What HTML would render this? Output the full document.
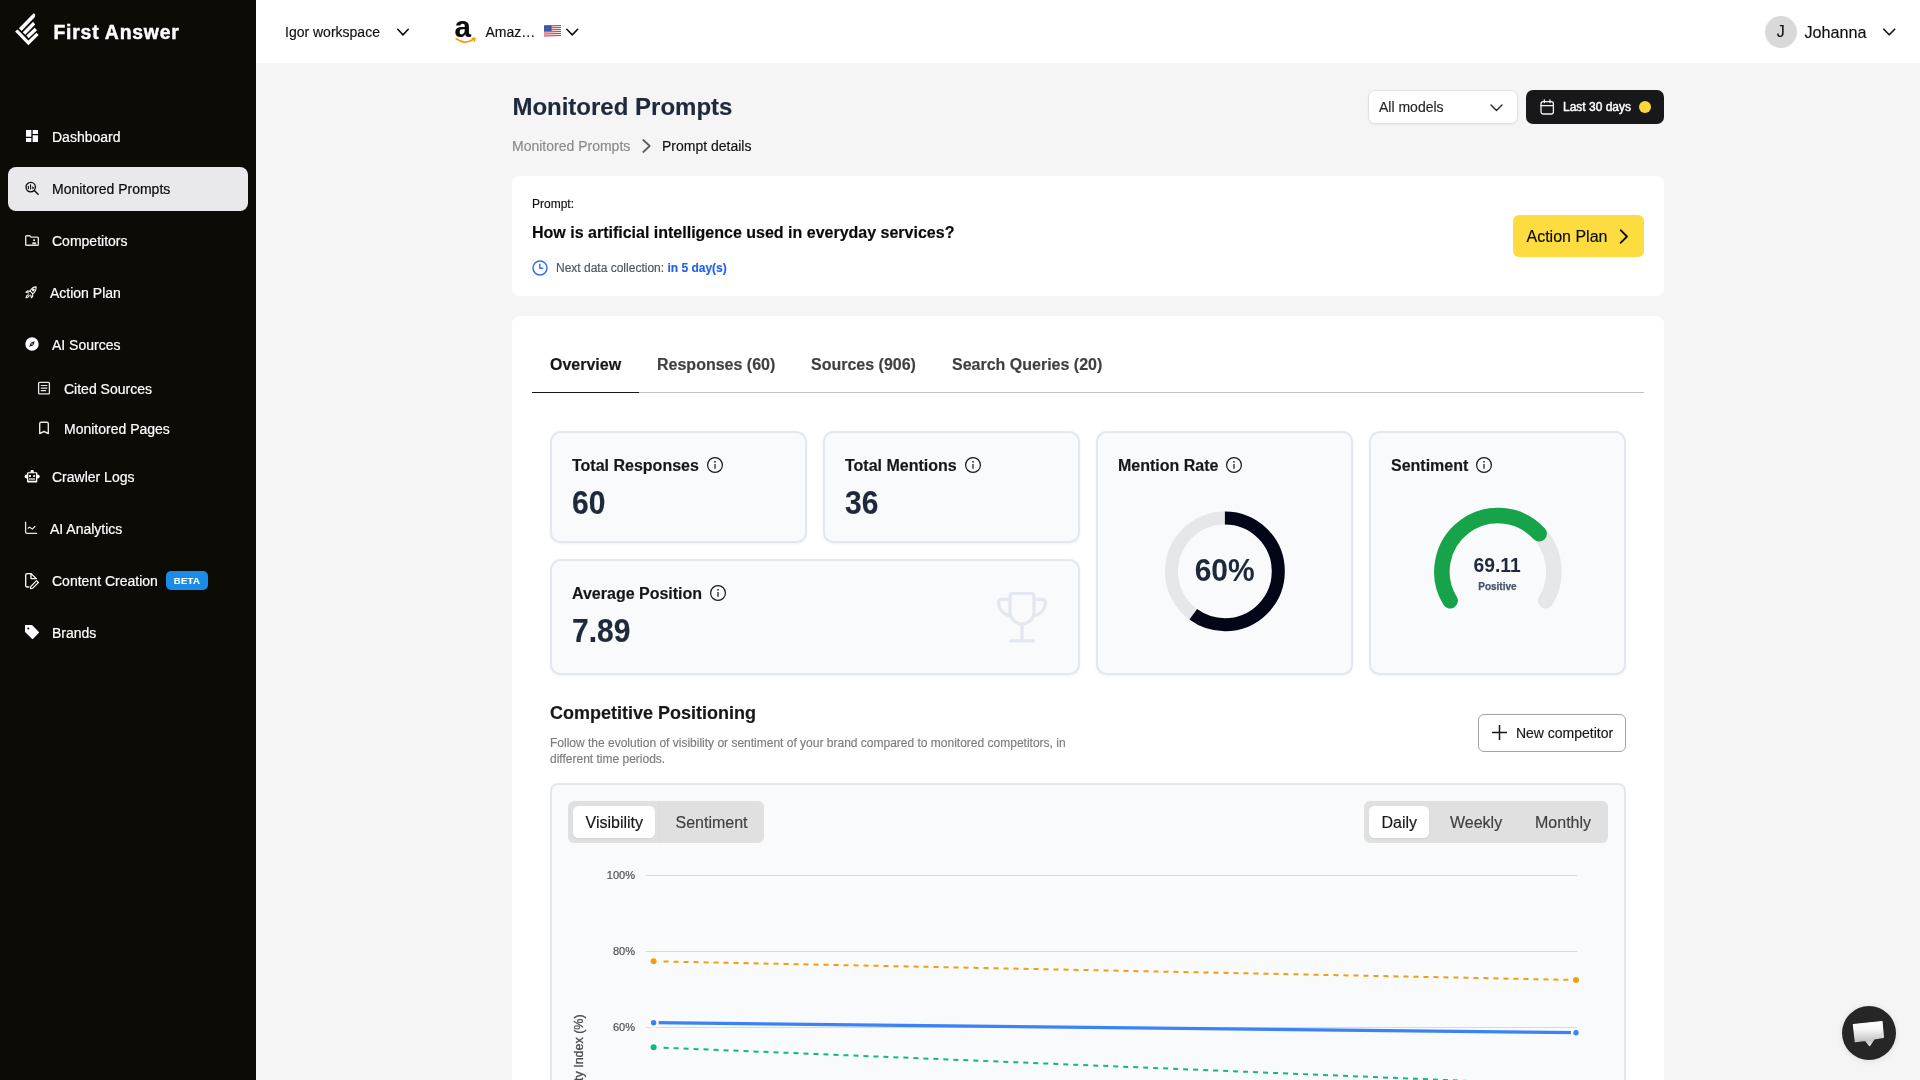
<!DOCTYPE html>
<html lang="en">
<head>
<meta charset="utf-8">
<title>Monitored Prompts - First Answer</title>
<style>
*{box-sizing:border-box;margin:0;padding:0}
html,body{width:1920px;height:1080px;overflow:hidden;background:#f5f5f5}
body{font-family:"Liberation Sans",Arial,Helvetica,sans-serif;color:#0a0a0a;position:relative;-webkit-font-smoothing:antialiased;will-change:transform;-webkit-text-stroke:.16px currentColor}
.abs{position:absolute}
.t{position:absolute;white-space:nowrap;line-height:20px}
svg{display:block;overflow:visible}

/* Sidebar */
#sidebar{position:absolute;left:0;top:0;width:256px;height:1080px;background:#0c0b06}
#logo-text{left:53.5px;top:17.7px;font-size:19.4px;line-height:28px;font-weight:700;color:#fff;letter-spacing:.78px;-webkit-text-stroke:.45px #fff}
.nav{position:absolute;left:8px;width:240px;height:44px;border-radius:8px;color:#fff;font-size:14px}
.nav.active{background:#e9e9eb;color:#0a0a0a}
.nav .ic{position:absolute;left:16px;top:13px;width:16px;height:16px}
.nav .lb{position:absolute;left:44px;top:12px;line-height:20px;white-space:nowrap;-webkit-text-stroke:.2px currentColor}
.nav.sub .ic{left:28px}
.nav.sub .lb{left:56px}
.beta{position:absolute;left:158px;top:11.7px;width:42px;height:19.4px;border-radius:5px;background:#1a8be6;color:#fff;font-size:9.5px;font-weight:700;line-height:19.4px;text-align:center;letter-spacing:.3px}

/* Topbar */
#topbar{position:absolute;left:256px;top:0;width:1664px;height:63px;background:#fff}

/* Header */
#title{left:512.4px;top:91px;font-size:24px;line-height:32px;font-weight:700;color:#1e293b}
.card{position:absolute;background:#fff;border-radius:8px}
.stat{position:absolute;background:#f9fafc;border:2px solid #e3e7ef;border-radius:10.5px;box-shadow:0 1px 2.5px rgba(100,116,139,.09)}
.stat .h{position:absolute;left:20px;top:20.7px;font-size:16px;line-height:24px;font-weight:700;color:#171717;white-space:nowrap}
.stat .v{position:absolute;left:20px;top:51.1px;font-size:30px;line-height:40px;font-weight:700;color:#1e293b;white-space:nowrap;transform:scaleY(1.09);transform-origin:0 30.4px}
.stat .info{position:absolute;margin-left:-1.25px;top:22.9px;width:18px;height:18px}
.tab{top:38px;font-size:16px;line-height:22px;font-weight:700;color:#404040}
.seg{background:#e0e0e0;border-radius:6px}
.segon{background:#fff;border-radius:5.5px;box-shadow:0 1px 2px rgba(0,0,0,.06)}
.chev{fill:none;stroke:#111;stroke-width:1.6;stroke-linecap:round;stroke-linejoin:round}
</style>
</head>
<body>

<!-- ============ SIDEBAR ============ -->
<div id="sidebar">
  <svg class="abs" style="left:0;top:0" width="56" height="56" viewBox="0 0 56 56" fill="#fff">
    <polygon points="28.4,45.3 15.1,31.6 17.6,29.6 28.4,40.4 36.4,32.7 38.7,35.1"/>
    <polygon points="18.9,28.2 33.6,13.3 35.2,14.4 34.9,17.1 21.6,31.1"/>
    <polygon points="22.7,32.2 33.1,21.8 35.2,24.4 25.3,34.7"/>
    <polygon points="26.4,35.6 34.7,27.8 37,30.2 28.7,38.2"/>
  </svg>
  <div class="t" id="logo-text">First Answer</div>

  <div class="nav" style="top:115px"><span class="ic" id="ic-dash"><svg width="16" height="16" viewBox="0 0 24 24" fill="#fff"><path d="M3 13h8V3H3v10zm0 8h8v-6H3v6zm10 0h8V11h-8v10zm0-18v6h8V3h-8z"/></svg></span><span class="lb">Dashboard</span></div>
  <div class="nav active" style="top:167px"><span class="ic" id="ic-mon"><svg width="16" height="16" viewBox="0 0 16 16" fill="none" stroke="#0a0a0a" stroke-linecap="round"><circle cx="6.7" cy="7.1" r="4.7" stroke-width="1.3"/><path d="M10.3 10.6L14.1 14.3" stroke-width="1.4"/><path d="M4.4 6.2V8.6M6.6 4.9V8.9" stroke-width="1.1"/><path d="M8.9 7.2V8.4" stroke-width="1.3"/></svg></span><span class="lb">Monitored Prompts</span></div>
  <div class="nav" style="top:219px"><span class="ic" id="ic-comp"><svg width="16" height="16" viewBox="0 0 16 16" fill="none" stroke="#e0e0e0" stroke-width="1.4" stroke-linejoin="round"><path d="M1.7 4.6Q1.7 3.7 2.6 3.7H5.6L7.1 5.1H13.4Q14.3 5.1 14.3 6V12.4Q14.3 13.3 13.4 13.3H2.6Q1.7 13.3 1.7 12.4Z"/><rect x="9.3" y="7.3" width="1.7" height="1.7" fill="#fff" stroke="none"/><rect x="8.3" y="10.3" width="3.8" height="2" fill="#e0e0e0" stroke="none"/></svg></span><span class="lb">Competitors</span></div>
  <div class="nav" style="top:271px"><span class="ic" id="ic-act"><svg width="16" height="16" viewBox="-.85 -2.1 18.6 18.6" fill="none" stroke="#fff" stroke-width="1.25" stroke-linejoin="round" stroke-linecap="round"><path d="M13.3 1.2C10.2 1.3 7.6 3.2 6.2 6.2L9.2 9.2C12.1 7.8 13.3 4.6 13.3 1.2Z"/><circle cx="10" cy="4.9" r="1"/><path d="M6.2 6.2L2.9 6.1L1.4 7.6L4.6 8.4M9.2 9.2L9.3 12.3L7.8 13.9L7 10.7"/><path d="M4.2 10.3C3 10.5 1.9 11.5 1.5 13.9C3.9 13.5 4.9 12.5 5.2 11.3"/></svg></span><span class="lb" style="left:42px">Action Plan</span></div>
  <div class="nav" style="top:323px"><span class="ic" id="ic-src"><svg width="16" height="16" viewBox="0 0 16 16"><path fill="#fff" fill-rule="evenodd" d="M8 1.3A6.7 6.7 0 1 0 8 14.7A6.7 6.7 0 1 0 8 1.3ZM5.3 10.7L6.7 6.7L10.7 5.3L9.3 9.3Z"/><circle cx="8" cy="8" r=".8" fill="#fff"/></svg></span><span class="lb">AI Sources</span></div>
  <div class="nav sub" style="top:367px"><span class="ic" id="ic-cited"><svg width="16" height="16" viewBox="0 0 16 16" fill="none" stroke="#e6e6e6" stroke-width="1.3"><rect x="2.6" y="2.3" width="10.8" height="11.6" rx="1"/><path d="M4.8 5.5H11.3M4.8 8.1H11.3M4.8 10.7H10.2" stroke-width="1.2"/></svg></span><span class="lb">Cited Sources</span></div>
  <div class="nav sub" style="top:407px"><span class="ic" id="ic-pages"><svg width="16" height="16" viewBox="0 0 16 16" fill="none" stroke="#e6e6e6" stroke-width="1.4" stroke-linejoin="round"><path d="M3.7 13.5V3.7Q3.7 2.3 5.1 2.3H10.9Q12.3 2.3 12.3 3.7V13.5L8 11.5Z"/></svg></span><span class="lb">Monitored Pages</span></div>
  <div class="nav" style="top:455px"><span class="ic" id="ic-crawl"><svg width="16" height="16" viewBox="0 0 16 16"><g fill="#fff"><circle cx="2.7" cy="8.5" r="2.1"/><circle cx="13.6" cy="8.5" r="2.1"/><path d="M6.1 4.4L7 2.3Q7.2 2 7.5 2H8.8Q9.1 2 9.3 2.3L10.2 4.4Z"/><rect x="3" y="4.2" width="10.3" height="10.3" rx="1"/></g><rect x="4.3" y="5.3" width="7.7" height="7.4" fill="#0c0b06"/><rect x="5" y="7.1" width="2" height="1.8" fill="#fff"/><rect x="9.2" y="7.1" width="1.9" height="1.8" fill="#fff"/><rect x="5" y="10.2" width="6.1" height="1.6" fill="#c4c4c4"/></svg></span><span class="lb">Crawler Logs</span></div>
  <div class="nav" style="top:507px"><span class="ic" id="ic-ana"><svg width="16" height="16" viewBox="0 0 16 16" fill="none" stroke="#e6e6e6" stroke-linecap="round" stroke-linejoin="round"><path d="M1.6 2.1V11.9Q1.6 13.3 3 13.3H12.7" stroke-width="1.3"/><path d="M4.1 8.2L5.6 7.1L8.3 9.1L11 6.3" stroke="#fff" stroke-width="1.1"/></svg></span><span class="lb" style="left:42px">AI Analytics</span></div>
  <div class="nav" style="top:559px"><span class="ic" id="ic-cont"><svg width="16" height="16" viewBox="0 0 16 16" fill="none" stroke="#fff" stroke-width="1.3" stroke-linejoin="round" stroke-linecap="round"><path d="M4.9 15H3.3Q1.7 15 1.7 13.4V3.2Q1.7 1.6 3.3 1.6H7L12.3 6.6"/><path d="M7 1.8V6.6H12.1" /><path d="M12.6 8.7L14.4 10.5L8.6 16.3L6.5 16.6L6.8 14.5Z" stroke-width="1.1"/></svg></span><span class="lb">Content Creation</span><span class="beta">BETA</span></div>
  <div class="nav" style="top:611px"><span class="ic" id="ic-brand"><svg width="16" height="16" viewBox="0 0 16 16"><path fill="#fff" fill-rule="evenodd" d="M1 1.6Q1 1 1.6 1H7.7Q8 1 8.3 1.3L14.9 7.9Q15.2 8.3 14.9 8.7L8.9 14.9Q8.5 15.3 8.1 14.9L1.3 8.2Q1 7.9 1 7.6ZM4.3 3.4A1 1 0 1 0 4.3 5.4A1 1 0 1 0 4.3 3.4Z"/></svg></span><span class="lb">Brands</span></div>
</div>

<!-- ============ TOPBAR ============ -->
<div id="topbar">
  <div class="t" style="left:29px;top:22px;font-size:14px;color:#111">Igor workspace</div>
  <svg class="abs chev" style="left:141px;top:27.5px" width="12" height="9" viewBox="0 0 12 9"><path d="M.8 1.3L6 6.9L11.2 1.3"/></svg>
  <!-- amazon mark -->
  <div class="t" style="left:198.6px;top:12.6px;font-size:29.5px;line-height:28px;font-weight:700;color:#0a0a0a">a</div>
  <svg class="abs" style="left:198.5px;top:36.6px" width="22" height="8" viewBox="0 0 22 8" fill="none" stroke="#f90" stroke-linecap="round"><path d="M1.2 1.6C6.5 5.8 13 5.8 18.6 2.2" stroke-width="1.7"/><path d="M17 1.3L20.3 1.1L19.4 4.2" stroke-width="1.2" stroke-linejoin="round"/></svg>
  <div class="t" style="left:229.5px;top:22px;font-size:14px;color:#111">Amaz…</div>
  <!-- US flag -->
  <svg class="abs" style="left:287.5px;top:25px" width="17" height="12" viewBox="0 0 17 12">
    <g transform="skewY(-2)"><rect x="0" y=".6" width="17" height="11" rx="1" fill="#f2f2f2"/>
    <g fill="#d8323f"><rect x="0" y=".6" width="17" height="1.1"/><rect x="0" y="2.6" width="17" height="1"/><rect x="0" y="4.6" width="17" height="1"/><rect x="0" y="6.6" width="17" height="1"/><rect x="0" y="8.6" width="17" height="1"/><rect x="0" y="10.5" width="17" height="1.1"/></g>
    <rect x="0" y=".6" width="7.6" height="6" fill="#3c5aa6"/></g>
  </svg>
  <svg class="abs chev" style="left:310px;top:27.5px" width="12.5" height="9" viewBox="0 0 12.5 9"><path d="M.8 1.3L6.25 6.9L11.7 1.3"/></svg>

  <div class="abs" style="left:1508.7px;top:15.5px;width:32px;height:32px;border-radius:50%;background:#d9d9d9"></div>
  <div class="t" style="left:1508.7px;top:22px;width:32px;text-align:center;font-size:16px;color:#111">J</div>
  <div class="t" style="left:1548.5px;top:22px;font-size:16.2px;color:#111">Johanna</div>
  <svg class="abs chev" style="left:1627px;top:28px" width="12.5" height="9" viewBox="0 0 12.5 9"><path d="M.8 1.2L6.25 6.8L11.7 1.2"/></svg>
</div>

<!-- ============ PAGE HEADER ============ -->
<div class="t" id="title">Monitored Prompts</div>
<div class="t" style="left:512px;top:136px;font-size:14px;color:#8a8a8a">Monitored Prompts</div>
<div class="t" style="left:662px;top:136px;font-size:14px;color:#111">Prompt details</div>

<svg class="abs" style="left:642px;top:139px;fill:none;stroke:#5e5e5e;stroke-width:1.8;stroke-linecap:round;stroke-linejoin:round" width="9" height="14" viewBox="0 0 9 14"><path d="M1.3 1L7.7 7L1.3 13"/></svg>

<!-- all models select -->
<div class="abs" style="left:1367.6px;top:90px;width:150px;height:33.5px;background:#fff;border:1px solid #e2e2e2;border-radius:7px;box-shadow:0 1px 2px rgba(0,0,0,.05)">
  <div class="t" style="left:10.4px;top:6px;font-size:14px;color:#262626">All models</div>
  <svg class="abs chev" style="left:121px;top:12.5px;stroke:#262626;stroke-width:1.4" width="13" height="8" viewBox="0 0 13 8"><path d="M1 1L6.5 6.6L12 1"/></svg>
</div>
<!-- last 30 days -->
<div class="abs" style="left:1526px;top:89.8px;width:138px;height:34px;background:#18181b;border-radius:7px">
  <svg class="abs" style="left:13.5px;top:9.5px" width="15" height="16" viewBox="0 0 15 16" fill="none" stroke="#f2f2f2" stroke-width="1.3" stroke-linecap="round"><rect x="1" y="2.6" width="12.4" height="12.4" rx="2.2"/><path d="M1 6.6H13.4M4.3 .8V3.6M10 .8V3.6"/></svg>
  <div class="t" style="left:37px;top:7px;font-size:12px;color:#fff;-webkit-text-stroke:.45px #fff">Last 30 days</div>
  <div class="abs" style="left:113px;top:11.2px;width:12px;height:12px;border-radius:50%;background:#fdd835"></div>
</div>

<!-- ============ PROMPT CARD ============ -->
<div class="card" style="left:512px;top:176px;width:1152px;height:120px">
  <div class="t" style="left:20px;top:18px;font-size:12px;color:#111">Prompt:</div>
  <div class="t" style="left:20px;top:45.2px;font-size:16px;line-height:24px;font-weight:700;color:#0a0a0a">How is artificial intelligence used in everyday services?</div>
  <svg class="abs" style="left:20px;top:84px" width="16" height="16" viewBox="0 0 16 16" fill="none" stroke="#3b6cf0" stroke-width="1.5" stroke-linecap="round" stroke-linejoin="round"><circle cx="8" cy="8" r="7"/><path d="M7.8 4.2V8.3H10.6"/></svg>
  <div class="abs" style="left:1001px;top:39px;width:131px;height:42px;border-radius:6px;background:#fddc3f">
    <div class="t" style="left:13.5px;top:12.2px;font-size:16px;color:#0a0a0a">Action Plan</div>
    <svg class="abs" style="left:106px;top:13.5px;fill:none;stroke:#0a0a0a;stroke-width:1.8;stroke-linecap:round;stroke-linejoin:round" width="10" height="15" viewBox="0 0 10 15"><path d="M1.6 1.2L8 7.5L1.6 13.8"/></svg>
  </div>
  <div class="t" style="left:44px;top:82px;font-size:12px;color:#4b5563">Next data collection: <b style="color:#2563eb">in 5 day(s)</b></div>
</div>

<!-- ============ MAIN CARD ============ -->
<div class="card" id="main" style="left:512px;top:316px;width:1152px;height:800px">
  <!-- tabs -->
  <div class="abs" style="left:20px;top:76px;width:1112px;height:1px;background:#c2c2c2"></div>
  <div class="abs" style="left:20px;top:76px;width:107px;height:1px;background:#171717"></div>
  <div class="t tab" style="left:38px;color:#171717">Overview</div>
  <div class="t tab" style="left:145px">Responses (60)</div>
  <div class="t tab" style="left:299px">Sources (906)</div>
  <div class="t tab" style="left:440px">Search Queries (20)</div>

  <!-- stat cards -->
  <div class="stat" style="left:38px;top:115px;width:257px;height:112px">
    <div class="h">Total Responses</div><div class="v">60</div>
    <svg class="info" style="left:155px" viewBox="0 0 18 18"><use href="#i-info"/></svg>
  </div>
  <div class="stat" style="left:311px;top:115px;width:257px;height:112px">
    <div class="h">Total Mentions</div><div class="v">36</div>
    <svg class="info" style="left:140px" viewBox="0 0 18 18"><use href="#i-info"/></svg>
  </div>
  <div class="stat" style="left:38px;top:243px;width:530px;height:116px">
    <div class="h">Average Position</div><div class="v">7.89</div>
    <svg class="abs" style="left:444px;top:29px" width="52" height="54" viewBox="0 0 52 54" fill="none" stroke="#e2e8f0" stroke-width="3.2" stroke-linecap="round" stroke-linejoin="round">
      <path d="M17 3.5 H35 Q38 3.5 38 6.5 V22 A12 12 0 0 1 14 22 V6.5 Q14 3.5 17 3.5 Z"/>
      <path d="M26 34 V50 M14.5 50.8 H37.5"/>
      <path d="M14 9.3 H5.8 Q2.6 9.3 2.6 12.5 C2.6 19.5 8 24.8 14 25.6"/>
      <path d="M38 9.3 H46.2 Q49.4 9.3 49.4 12.5 C49.4 19.5 44 24.8 38 25.6"/>
    </svg>
    <svg class="info" style="left:158px" viewBox="0 0 18 18"><use href="#i-info"/></svg>
  </div>
  <div class="stat" style="left:584px;top:115px;width:257px;height:244px">
    <div class="h">Mention Rate</div>
    <svg class="abs" style="left:.1px;top:.9px" width="253" height="239">
      <circle cx="126.9" cy="137.3" r="53.4" fill="none" stroke="#e5e7eb" stroke-width="13"/>
      <circle cx="126.9" cy="137.3" r="53.4" fill="none" stroke="#020617" stroke-width="13" stroke-dasharray="201.31 335.52" transform="rotate(-90 126.9 137.3)"/>
      <text transform="translate(126.7,146.9) scale(1,1.06)" text-anchor="middle" font-size="30" font-weight="700" fill="#1e293b" font-family="Liberation Sans, Arial, sans-serif">60%</text>
    </svg>
    <svg class="info" style="left:128px" viewBox="0 0 18 18"><use href="#i-info"/></svg>
  </div>
  <div class="stat" style="left:857px;top:115px;width:257px;height:244px">
    <div class="h">Sentiment</div>
    <svg class="abs" style="left:-.1px;top:.7px" width="253" height="239">
      <path d="M79.10 166.78 A56 56 0 1 1 174.70 166.78" fill="none" stroke="#e5e7eb" stroke-width="15.5" stroke-linecap="round"/>
      <path d="M79.10 166.78 A56 56 0 0 1 168.19 99.77" fill="none" stroke="#16a34a" stroke-width="15.5" stroke-linecap="round"/>
      <text transform="translate(126.1,137.8) scale(1,1.05)" text-anchor="middle" font-size="19.3" font-weight="700" fill="#1e293b" font-family="Liberation Sans, Arial, sans-serif">69.11</text>
      <text x="126.4" y="155.9" text-anchor="middle" font-size="10" font-weight="700" fill="#475569" stroke="#475569" stroke-width=".25" font-family="Liberation Sans, Arial, sans-serif">Positive</text>
    </svg>
    <svg class="info" style="left:105px" viewBox="0 0 18 18"><use href="#i-info"/></svg>
  </div>

  <!-- competitive positioning -->
  <div class="t" style="left:38px;top:384px;font-size:18px;line-height:26px;font-weight:700;color:#171717">Competitive Positioning</div>
  <div class="abs" style="left:38px;top:419.2px;width:540px;font-size:12px;line-height:16px;color:#7d7d7d">Follow the evolution of visibility or sentiment of your brand compared to monitored competitors, in different time periods.</div>

  <!-- new competitor button -->
  <div class="abs" style="left:966.4px;top:398px;width:147.2px;height:37.5px;border:1px solid #a3a3a3;border-radius:6px;background:#fff">
    <svg class="abs" style="left:12.7px;top:9.9px" width="15" height="15" viewBox="0 0 15 15"><path d="M7.5 0v15M0 7.5h15" stroke="#171717" stroke-width="1.5" fill="none"/></svg>
    <div class="t" style="left:36.5px;top:7.5px;font-size:14px;color:#171717">New competitor</div>
  </div>

  <!-- chart card -->
  <div class="abs" id="chart" style="left:38px;top:467px;width:1076px;height:400px;border:2px solid #e5e6e7;border-radius:8px;background:#f9fafb">
    <div class="abs seg" style="left:16px;top:16px;width:196px;height:42px"></div>
    <div class="abs" style="left:106.5px;top:16px;width:1px;height:42px;background:#dbdbdb"></div>
    <div class="abs segon" style="left:21px;top:21px;width:82px;height:32px"></div>
    <div class="t" style="left:33.5px;top:27.2px;font-size:16px;line-height:22px;color:#171717">Visibility</div>
    <div class="t" style="left:123.5px;top:27.2px;font-size:16px;line-height:22px;color:#404040">Sentiment</div>

    <div class="abs seg" style="left:812px;top:16px;width:244px;height:42px"></div>
    <div class="abs segon" style="left:817px;top:21px;width:60px;height:32px"></div>
    <div class="t" style="left:829.5px;top:27.2px;font-size:16px;line-height:22px;color:#171717">Daily</div>
    <div class="t" style="left:898px;top:27.2px;font-size:16px;line-height:22px;color:#404040">Weekly</div>
    <div class="t" style="left:983px;top:27.2px;font-size:16px;line-height:22px;color:#404040">Monthly</div>

    <svg class="abs" style="left:-2px;top:-1px" width="1076" height="400" font-family="Liberation Sans, Arial, sans-serif">
      <!-- origin = page (550,784) -->
      <g stroke="#d9d9d9" stroke-width="1">
        <path d="M95.5 91.5H1027 M95.5 167.5H1027 M95.5 243.5H1027"/>
      </g>
      <g font-size="11" fill="#525252" stroke="#525252" stroke-width=".2" text-anchor="end">
        <text x="85" y="95">100%</text>
        <text x="85" y="171">80%</text>
        <text x="85" y="247">60%</text>
      </g>
      <text transform="translate(33.2,281.3) rotate(-90)" font-size="12.5" fill="#4b4b4b" stroke="#4b4b4b" stroke-width=".3" text-anchor="middle" id="ylab">Visibility Index (%)</text>
      <path d="M103.6 177.3 L1026 196" stroke="#f59e0b" stroke-width="2" stroke-dasharray="5 5" fill="none"/>
      <path d="M103.6 263.3 L1026 301.4" stroke="#10b981" stroke-width="2" stroke-dasharray="5 5" fill="none"/>
      <path d="M103.6 238.7 L1026 248.7" stroke="#3b82f6" stroke-width="3.2" fill="none"/>
      <g fill="#fafbfc">
        <circle cx="103.6" cy="177.3" r="5.2"/><circle cx="1026" cy="196" r="5.2"/>
        <circle cx="103.6" cy="263.3" r="5.2"/>
        <circle cx="103.6" cy="238.7" r="5.2"/><circle cx="1026" cy="248.7" r="5.2"/>
      </g>
      <circle cx="103.6" cy="177.3" r="3" fill="#f59e0b"/><circle cx="1026" cy="196" r="3" fill="#f59e0b"/>
      <circle cx="103.6" cy="263.3" r="3" fill="#10b981"/>
      <circle cx="103.6" cy="238.7" r="2.7" fill="#3b82f6"/><circle cx="1026" cy="248.7" r="2.7" fill="#3b82f6"/>
    </svg>
  </div>
</div>

<svg width="0" height="0" style="position:absolute"><defs><g id="i-info"><circle cx="9" cy="9" r="7.4" fill="none" stroke="#171717" stroke-width="1.2"/><rect x="8.4" y="8" width="1.2" height="4.8" fill="#171717"/><circle cx="9" cy="5.8" r=".85" fill="#171717"/></g></defs></svg>

<!-- chat widget -->
<div class="abs" style="left:1842px;top:1005.7px;width:54px;height:54px;border-radius:50%;background:#262626;box-shadow:0 1px 6px rgba(0,0,0,.1)">
  <svg class="abs" style="left:0;top:0" width="54" height="54" viewBox="0 0 54 54">
    <defs><linearGradient id="cg" x1="0" y1="0" x2="0" y2="1"><stop offset="0" stop-color="#fff"/><stop offset=".35" stop-color="#f4f4f4"/><stop offset=".8" stop-color="#c4c4c4"/><stop offset="1" stop-color="#e8e8e8"/></linearGradient></defs>
    <path d="M11.4 18.6 L40 15.5 L41.4 31.3 L32.2 32.9 L27.6 39.6 L23.3 34.3 L13.3 35.6 Z" fill="url(#cg)" stroke="url(#cg)" stroke-width="1.2" stroke-linejoin="round"/>
  </svg>
</div>
</body>
</html>
